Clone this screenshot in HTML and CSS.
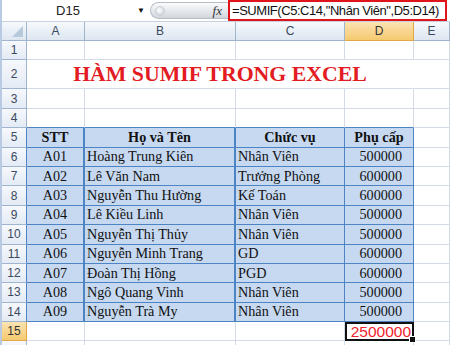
FILE: index.html
```html
<!DOCTYPE html>
<html lang="vi">
<head>
<meta charset="UTF-8">
<title>Hàm SUMIF trong Excel</title>
<link rel="stylesheet" href="styles.css">
</head>
<body>
  <div class="formula-bar">
    <div class="name-box">D15</div>
    <div class="name-arrow">&#9660;</div>
    <div class="fx-area">
      <span class="knob"></span>
      <span class="fx">fx</span>
    </div>
    <div class="formula">=SUMIF(C5:C14,"Nhân Viên",D5:D14)</div>
  </div>

  <table class="sheet">
    <colgroup>
      <col class="c-head">
      <col class="c-a">
      <col class="c-b">
      <col class="c-c">
      <col class="c-d">
      <col class="c-e">
    </colgroup>
    <tr class="col-heads">
      <th class="corner"><span class="tri"></span></th>
      <th>A</th>
      <th>B</th>
      <th>C</th>
      <th class="active">D</th>
      <th>E</th>
    </tr>
    <tr><th class="rh">1</th><td></td><td></td><td></td><td></td><td></td></tr>
    <tr class="tall">
      <th class="rh">2</th>
      <td colspan="4" class="title">HÀM SUMIF TRONG EXCEL</td>
      <td></td>
    </tr>
    <tr><th class="rh">3</th><td></td><td></td><td></td><td></td><td></td></tr>
    <tr class="above"><th class="rh">4</th><td></td><td></td><td></td><td></td><td></td></tr>
    <tr class="data head">
      <th class="rh">5</th>
      <td class="mid">STT</td>
      <td class="mid">Họ và Tên</td>
      <td class="mid">Chức vụ</td>
      <td class="mid">Phụ cấp</td>
      <td></td>
    </tr>
    <tr class="data"><th class="rh">6</th><td class="mid">A01</td><td>Hoàng Trung Kiên</td><td>Nhân Viên</td><td class="num">500000</td><td></td></tr>
    <tr class="data"><th class="rh">7</th><td class="mid">A02</td><td>Lê Văn Nam</td><td>Trưởng Phòng</td><td class="num">600000</td><td></td></tr>
    <tr class="data"><th class="rh">8</th><td class="mid">A03</td><td>Nguyễn Thu Hường</td><td>Kế Toán</td><td class="num">600000</td><td></td></tr>
    <tr class="data"><th class="rh">9</th><td class="mid">A04</td><td>Lê Kiều Linh</td><td>Nhân Viên</td><td class="num">500000</td><td></td></tr>
    <tr class="data"><th class="rh">10</th><td class="mid">A05</td><td>Nguyễn Thị Thủy</td><td>Nhân Viên</td><td class="num">500000</td><td></td></tr>
    <tr class="data"><th class="rh">11</th><td class="mid">A06</td><td>Nguyễn Minh Trang</td><td>GD</td><td class="num">600000</td><td></td></tr>
    <tr class="data"><th class="rh">12</th><td class="mid">A07</td><td>Đoàn Thị Hồng</td><td>PGD</td><td class="num">600000</td><td></td></tr>
    <tr class="data"><th class="rh">13</th><td class="mid">A08</td><td>Ngô Quang Vinh</td><td>Nhân Viên</td><td class="num">500000</td><td></td></tr>
    <tr class="data"><th class="rh">14</th><td class="mid">A09</td><td>Nguyễn Trà My</td><td>Nhân Viên</td><td class="num">500000</td><td></td></tr>
    <tr>
      <th class="rh active">15</th>
      <td></td><td></td><td></td>
      <td class="num total">2500000<span class="handle"></span></td>
      <td></td>
    </tr>
    <tr><th class="rh"></th><td></td><td></td><td></td><td></td><td></td></tr>
  </table>
</body>
</html>
```

FILE: styles.css
```css
body {
  margin: 0;
  background: #ffffff;
  width: 450px;
  height: 345px;
  overflow: hidden;
  border-left: 2px solid #b8cbe3;
  box-sizing: border-box;
}

/* formula bar */
.formula-bar {
  display: flex;
  align-items: center;
  height: 21px;
  border-bottom: 1px solid #c5d2e2;
  background: #ffffff;
  font-family: "Liberation Sans", Arial, sans-serif;
}

.name-box {
  width: 132px;
  text-align: center;
  font-size: 13px;
  color: #222;
}

.name-arrow {
  width: 14px;
  font-size: 8px;
  color: #111;
  text-align: center;
}

.fx-area {
  position: relative;
  width: 78px;
  height: 17px;
  margin-left: 2px;
  border: 1px solid #b7bec8;
  border-right: none;
  border-radius: 9px 0 0 9px;
  background: linear-gradient(#fbfbfc, #e4e7eb 55%, #d2d6dc);
  display: flex;
  align-items: center;
  justify-content: space-between;
  padding: 0 6px 0 4px;
  box-sizing: border-box;
}

.knob {
  width: 8px;
  height: 8px;
  border-radius: 50%;
  background: radial-gradient(circle at 40% 40%, #ffffff, #c6cbd2);
  border: 1px solid #c9ced5;
}

.fx {
  font-family: "Liberation Serif", serif;
  font-style: italic;
  font-size: 13px;
  color: #333;
}

.formula {
  flex: 1;
  height: 17px;
  margin-right: 3px;
  border: 2px solid #e0141b;
  font-size: 13px;
  letter-spacing: -0.45px;
  line-height: 17px;
  padding-left: 2px;
  color: #111;
  white-space: nowrap;
  overflow: hidden;
}

/* sheet */
.sheet {
  border-collapse: separate;
  border-spacing: 0;
  table-layout: fixed;
  width: 448px;
  font-family: "Liberation Serif", "Times New Roman", serif;
  font-size: 14.2px;
  color: #111;
}

.c-head { width: 25px; }
.c-a { width: 58px; }
.c-b { width: 151px; }
.c-c { width: 109px; }
.c-d { width: 69px; }
.c-e { width: 36px; }

.sheet tr { height: 19.4px; }
.sheet tr.col-heads { height: 19px; }
.sheet tr.tall { height: 29px; }

.sheet td {
  border-right: 1px solid #d4dbe6;
  border-bottom: 1px solid #d4dbe6;
  padding: 0 2px;
  white-space: nowrap;
  overflow: visible;
  line-height: 17px;
}

.sheet th {
  font-family: "Liberation Sans", Arial, sans-serif;
  font-weight: normal;
  font-size: 12px;
  color: #3a4a60;
  background: linear-gradient(#f6f8fc, #e4ebf5);
  border-right: 1px solid #9fb5cf;
  border-bottom: 1px solid #9fb5cf;
  padding: 0;
}

.col-heads th {
  background: linear-gradient(#f7f9fc, #dde6f1);
}

.sheet th.active {
  background: linear-gradient(#fbe3b3, #f5c96f);
  color: #333;
  border-color: #e2a845;
}

.corner {
  position: relative;
}

.tri {
  position: absolute;
  right: 3px;
  bottom: 3px;
  width: 0;
  height: 0;
  border-left: 11px solid transparent;
  border-bottom: 11px solid #b9c9dc;
}

.title {
  text-align: center;
  font-weight: bold;
  font-size: 21.8px;
  color: #e31b22;
  border-right-color: transparent !important;
  line-height: 28px;
  padding-right: 14px;
}

.above td:nth-child(-n+5) {
  border-bottom-color: #4c84c4;
}

.data td:nth-child(-n+5) {
  background: #c6d9f1;
  border-right: 1px solid #4c84c4;
  border-bottom: 1px solid #4c84c4;
}

.data td:nth-child(2),
.data td:nth-child(3) {
  border-right-width: 2px;
}

.data th {
  border-right-color: #4c84c4;
}

.data.head td {
  font-weight: bold;
}

.mid { text-align: center; }
.num { text-align: right; }

.data td.num {
  padding-right: 11px;
}

.total {
  position: relative;
  font-family: "Liberation Sans", Arial, sans-serif;
  font-size: 15.5px;
  color: #f0232b;
  outline: 2px solid #111;
  outline-offset: -2px;
}

.handle {
  position: absolute;
  right: -3px;
  bottom: -3px;
  width: 5px;
  height: 5px;
  background: #111;
  border: 1px solid #fff;
}
```
